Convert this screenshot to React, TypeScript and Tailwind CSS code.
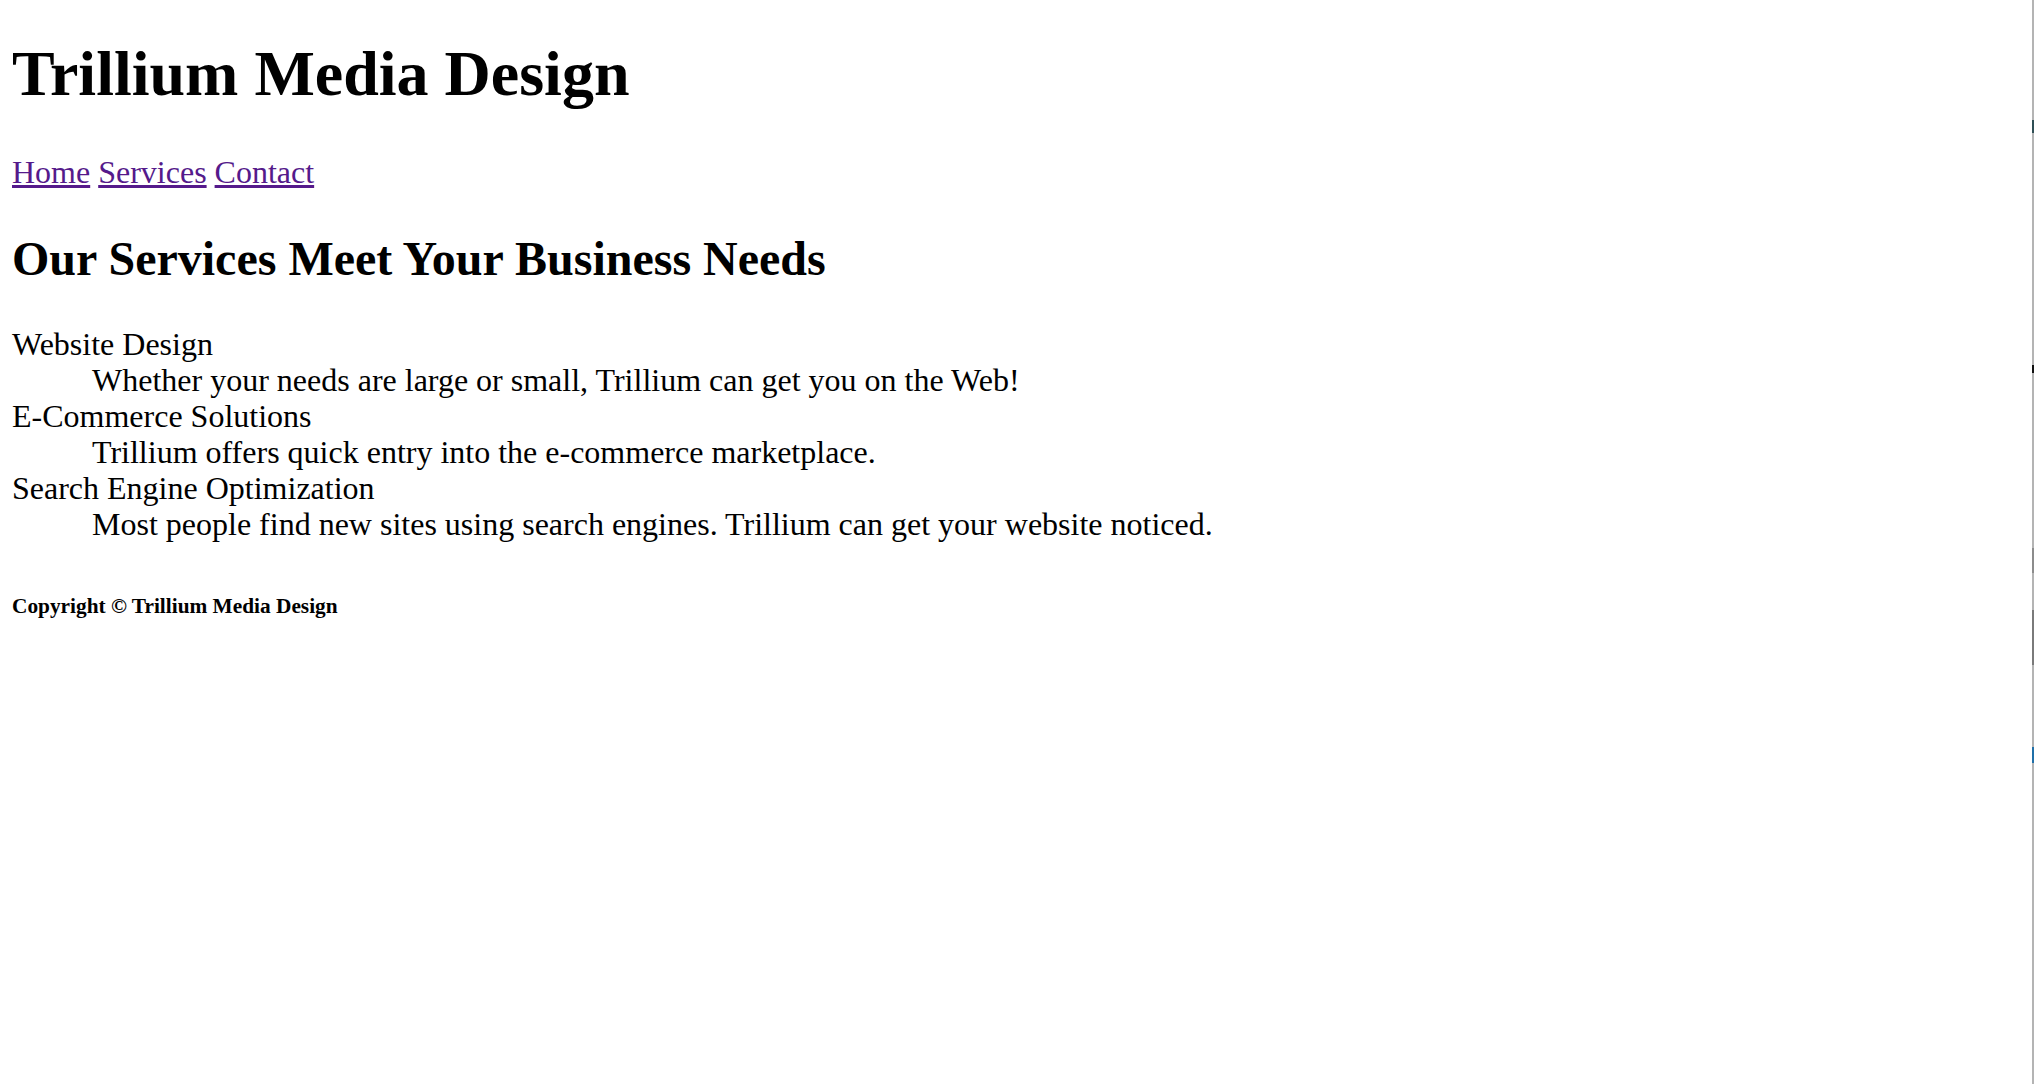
export default function App() {
    const services = [
        { name: "Website Design", text: "Whether your needs are large or small, Trillium can get you on the Web!" },
        { name: "E-Commerce Solutions", text: "Trillium offers quick entry into the e-commerce marketplace." },
        { name: "Search Engine Optimization", text: "Most people find new sites using search engines. Trillium can get your website noticed." },
    ];

    return (
        <div className="flex min-h-screen bg-white text-black font-['Liberation_Serif','Times_New_Roman',serif]">
            <div className="flex-1 pl-[12px]">
                <header>
                    <h1 className="mt-[37px] mb-[43px] text-[64px] font-bold leading-[normal]">Trillium Media Design</h1>
                    <nav className="text-[32px] leading-[normal]">
                        <a href="#" className="text-[#551a8b] underline">Home</a>{" "}
                        <a href="#" className="text-[#551a8b] underline">Services</a>{" "}
                        <a href="#" className="text-[#551a8b] underline">Contact</a>
                    </nav>
                </header>
                <main>
                    <h2 className="my-[40px] text-[48px] font-bold leading-[normal]">Our Services Meet Your Business Needs</h2>
                    <dl className="my-[32px] text-[32px] leading-[36px]">
                        {services.map((s) => (
                            <div key={s.name}>
                                <dt>{s.name}</dt>
                                <dd className="ml-[80px]">{s.text}</dd>
                            </div>
                        ))}
                    </dl>
                </main>
                <footer>
                    <h6 className="mt-[52px] text-[21.33px] font-bold leading-[normal]">Copyright &copy; Trillium Media Design</h6>
                </footer>
            </div>
            {/* window edge */}
            <div className="flex w-[2px] flex-col bg-[#b4b4b4]">
                <div className="h-[120px]" />
                <div className="h-[13px] bg-[#2f4f55]" />
                <div className="h-[232px]" />
                <div className="h-[8px] bg-[#111]" />
                <div className="h-[175px]" />
                <div className="h-[25px] bg-[#8c8c8c]" />
                <div className="h-[37px]" />
                <div className="h-[55px] bg-[#7a7a7a]" />
                <div className="h-[82px]" />
                <div className="h-[16px] bg-[#1f6fa8]" />
            </div>
        </div>
    );
}
